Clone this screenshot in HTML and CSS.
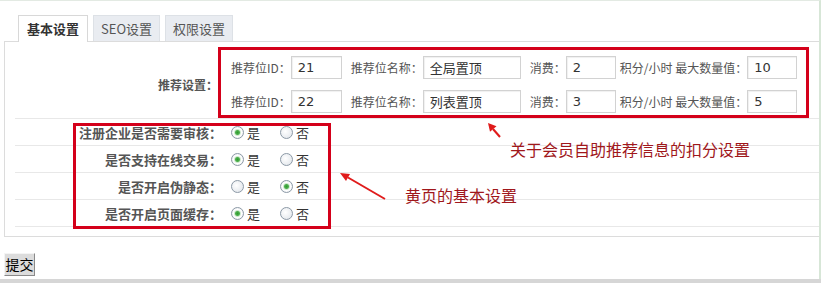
FILE: index.html
```html
<!DOCTYPE html>
<html lang="zh-CN">
<head>
    <meta charset="UTF-8">
    <title>基本设置</title>
    <link rel="stylesheet" href="styles.css">
</head>
<body>
    <div class="page">
        <ul class="tabs">
            <li class="tab active">基本设置</li>
            <li class="tab">SEO设置</li>
            <li class="tab">权限设置</li>
        </ul>
        <div class="panel">
            <div class="row row-rec">
                <div class="label label-rec">推荐设置：</div>
                <div class="rec-list">
                    <div class="rec-line">
                        <span class="cap">推荐位ID：</span><input class="box box-id" value="21">
                        <span class="cap">推荐位名称：</span><input class="box box-name" value="全局置顶">
                        <span class="cap">消费：</span><input class="box box-cost" value="2">
                        <span class="cap">积分/小时 最大数量值：</span><input class="box box-max" value="10">
                    </div>
                    <div class="rec-line">
                        <span class="cap">推荐位ID：</span><input class="box box-id" value="22">
                        <span class="cap">推荐位名称：</span><input class="box box-name" value="列表置顶">
                        <span class="cap">消费：</span><input class="box box-cost" value="3">
                        <span class="cap">积分/小时 最大数量值：</span><input class="box box-max" value="5">
                    </div>
                </div>
            </div>
            <div class="row row-opt">
                <div class="label">注册企业是否需要审核：</div>
                <div class="field">
                    <label class="opt"><input type="radio" class="radio" name="audit" checked>是</label>
                    <label class="opt"><input type="radio" class="radio" name="audit">否</label>
                </div>
            </div>
            <div class="row row-opt">
                <div class="label">是否支持在线交易：</div>
                <div class="field">
                    <label class="opt"><input type="radio" class="radio" name="trade" checked>是</label>
                    <label class="opt"><input type="radio" class="radio" name="trade">否</label>
                </div>
            </div>
            <div class="row row-opt">
                <div class="label">是否开启伪静态：</div>
                <div class="field">
                    <label class="opt"><input type="radio" class="radio" name="rewrite">是</label>
                    <label class="opt"><input type="radio" class="radio" name="rewrite" checked>否</label>
                </div>
            </div>
            <div class="row row-opt">
                <div class="label">是否开启页面缓存：</div>
                <div class="field">
                    <label class="opt"><input type="radio" class="radio" name="cache" checked>是</label>
                    <label class="opt"><input type="radio" class="radio" name="cache">否</label>
                </div>
            </div>

            <!-- annotations drawn over the form -->
            <div class="mark mark-rec"></div>
            <div class="mark mark-basic"></div>
            <svg class="arrows" width="816" height="200" viewBox="0 0 816 200">
                <line x1="495" y1="95" x2="488" y2="87" stroke="#e01b1b" stroke-width="2"/>
                <polygon points="483,81 491.5,84.3 485,89.8" fill="#e01b1b"/>
                <line x1="380" y1="157" x2="343" y2="135.5" stroke="#e01b1b" stroke-width="2"/>
                <polygon points="335,131 345,132 341,139" fill="#e01b1b"/>
            </svg>
            <div class="note note-rec">关于会员自助推荐信息的扣分设置</div>
            <div class="note note-basic">黄页的基本设置</div>
        </div>
        <button class="submit">提交</button>
    </div>
    <div class="bottom-bar"></div>
</body>
</html>
```

FILE: styles.css
```css
body {
    margin: 0;
    background: #fff;
    color: #333;
    font-family: "Noto Sans CJK SC", sans-serif;
    font-size: 12px;
}
.page {
    height: 279px;
    box-sizing: border-box;
    border-top: 1px solid #e3eae3;
    border-right: 2px solid #d7e6d7;
    overflow: hidden;
}
.bottom-bar {
    height: 4px;
    background: #d6d6d6;
}
.tabs {
    list-style: none;
    margin: 14px 0 0 18px;
    padding: 0;
    height: 26px;
    display: flex;
    align-items: flex-start;
    gap: 5px;
}
.tab {
    height: 25px;
    line-height: 25px;
    padding: 0 7px;
    border: 1px solid #dde1e6;
    border-bottom: none;
    background: #e9ecf1;
    color: #555;
    font-size: 13px;
}
.tab.active {
    position: relative;
    z-index: 1;
    height: 26px;
    padding: 0 8px;
    border-color: #d8d8d8;
    background: #fff;
    color: #333;
    font-weight: bold;
}
.panel {
    position: relative;
    margin-left: 4px;
    padding: 0 0 9px 10px;
    border: 1px solid #dcdcdc;
    border-right: none;
}
.row {
    display: flex;
    align-items: center;
    border-bottom: 1px solid #e8e8e8;
}
.row-rec {
    height: 57px;
    padding: 14px 0 5px;
}
.row-opt {
    height: 26px;
}
.label {
    flex: none;
    width: 207px;
    text-align: right;
    font-size: 13px;
    font-weight: bold;
    color: #555;
}
.label-rec {
    width: 203px;
    padding-right: 4px;
    font-size: 12px;
}
.rec-list {
    display: flex;
    flex-direction: column;
    gap: 11px;
    padding-left: 9px;
}
.rec-line {
    display: flex;
    align-items: center;
    height: 23px;
}
.cap {
    color: #555;
}
.box {
    height: 23px;
    box-sizing: border-box;
    margin: 0;
    padding: 0 6px;
    border: 1px solid #d2d2d2;
    box-shadow: inset 1px 1px 1px #f0f0f0;
    font-family: "DejaVu Sans", "Noto Sans CJK SC", sans-serif;
    font-size: 13px;
    color: #333;
    background: #fff;
}
.box-id {
    width: 51px;
    margin-right: 9px;
}
.box-name {
    width: 98px;
    margin-right: 9px;
}
.box-cost {
    width: 50px;
    margin-right: 4px;
}
.box-max {
    width: 50px;
}
.field {
    display: flex;
    align-items: center;
    padding-left: 9px;
}
.opt {
    display: flex;
    align-items: center;
    margin-right: 20px;
    font-size: 13px;
    color: #333;
}
.radio {
    appearance: none;
    width: 13px;
    height: 13px;
    margin: 0 3px 0 0;
    border: 1px solid #8c99a6;
    border-radius: 50%;
    background: radial-gradient(circle at 40% 40%, #fff, #dde2e8);
}
.radio:checked {
    background: radial-gradient(circle, #2e9a2e 0, #4fb04f 2px, #cfe9cf 3px, #fff 4px, #dde2e8 100%);
}
.mark {
    position: absolute;
    box-sizing: border-box;
    border: 3px solid #d4001a;
    pointer-events: none;
}
.mark-rec {
    left: 213px;
    top: 5px;
    width: 591px;
    height: 71px;
}
.mark-basic {
    left: 68px;
    top: 81px;
    width: 258px;
    height: 106px;
}
.arrows {
    position: absolute;
    left: 0;
    top: 0;
    pointer-events: none;
}
.note {
    position: absolute;
    font-size: 16px;
    line-height: 20px;
    color: #a0171b;
    white-space: nowrap;
}
.note-rec {
    left: 505px;
    top: 97px;
}
.note-basic {
    left: 400px;
    top: 143px;
}
.submit {
    display: block;
    width: 31px;
    height: 23px;
    margin: 16px 0 0 4px;
    padding: 0;
    border: 1px solid;
    border-color: #f4f4f4 #8a8a8a #8a8a8a #f4f4f4;
    background: #dcdcdc;
    font-family: "Noto Sans CJK SC", sans-serif;
    font-size: 14px;
    line-height: 21px;
    color: #000;
}
```
